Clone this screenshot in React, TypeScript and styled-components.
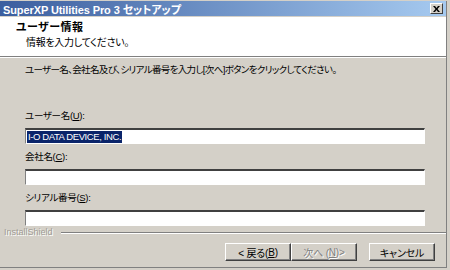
import React from 'react';
import styled, { createGlobalStyle } from 'styled-components';

const GlobalStyle = createGlobalStyle`
  html, body {
    margin: 0;
    padding: 0;
    background: #d4d0c8;
  }
  body {
    font-family: "Noto Sans CJK JP", "Liberation Sans", sans-serif;
    font-size: 11px;
    color: #000;
  }
`;

const jp = `"Liberation Sans", "Noto Sans CJK JP", sans-serif`;

const Frame = styled.div`
  width: 450px;
  height: 270px;
  box-sizing: border-box;
  padding: 1px 3px 2px 0;
  background: #d4d0c8;
  display: flex;
  flex-direction: column;
  overflow: hidden;
`;

const Window = styled.div`
  flex: 1;
  display: flex;
  flex-direction: column;
  border-right: 1px solid #808080;
  border-bottom: 1px solid #808080;
  min-height: 0;
`;

const TitleBar = styled.div`
  height: 15px;
  display: flex;
  align-items: center;
  justify-content: space-between;
  padding: 0 3px;
  background: linear-gradient(to right, #3b5e9f, #a6caf0);
  color: #fff;
  font-family: ${jp};
  font-weight: bold;
  font-size: 11px;
  font-feature-settings: 'palt';
  letter-spacing: -0.1px;
  white-space: nowrap;
`;

const CloseButton = styled.div`
  width: 13px;
  height: 11px;
  box-sizing: border-box;
  background: #d4d0c8;
  border: 1px solid;
  border-color: #fff #404040 #404040 #fff;
  display: flex;
  align-items: center;
  justify-content: center;
`;

const Header = styled.div`
  background: #fff;
  height: 40px;
  margin-top: 1px;
  padding: 4px 0 0 16px;
  box-sizing: border-box;
  border-bottom: 1px solid #808080;
  font-family: ${jp};
  font-feature-settings: 'palt';
`;

const HeaderTitle = styled.div`
  font-weight: bold;
  font-size: 11px;
  line-height: 13px;
  letter-spacing: 0.5px;
`;

const HeaderSub = styled.div`
  font-size: 10px;
  line-height: 13px;
  margin-top: 2px;
  padding-left: 10px;
  letter-spacing: -0.3px;
`;

const Body = styled.div`
  border-top: 1px solid #fff;
  padding: 5px 21px 0 25px;
  display: flex;
  flex-direction: column;
  font-family: ${jp};
  font-feature-settings: 'palt';
  font-size: 9.5px;
  letter-spacing: -0.3px;
`;

const Intro = styled.div`
  line-height: 13px;
  margin-bottom: 34px;
  white-space: nowrap;
  letter-spacing: -0.65px;
`;

const Label = styled.div`
  line-height: 12px;
  margin: 0 0 6px;
`;

const Field = styled.div`
  height: 16px;
  box-sizing: border-box;
  background: #fff;
  border-style: solid;
  border-width: 2px 1px 1px 1px;
  border-color: #404040 #fff #fff #808080;
  margin-bottom: 7px;
  display: flex;
  align-items: center;
  padding-left: 1px;

  &:last-child {
    margin-bottom: 0;
  }
`;

const Selected = styled.span`
  background: #0a246a;
  color: #fff;
  font-family: "Liberation Sans", sans-serif;
  font-size: 9.5px;
  line-height: 12px;
  padding: 0 1px;
  letter-spacing: -0.4px;
`;

const BrandRow = styled.div`
  display: flex;
  align-items: center;
  gap: 8px;
  padding: 0 0 0 4px;
  margin-top: 2px;
  height: 9px;
`;

const Brand = styled.span`
  font-family: "Liberation Sans", sans-serif;
  font-size: 9px;
  color: #a09c94;
  text-shadow: 1px 1px 0 #fff;
  line-height: 9px;
`;

const Etch = styled.div`
  flex: 1;
  height: 0;
  border-top: 1px solid #808080;
  border-bottom: 1px solid #fff;
`;

const ButtonRow = styled.div`
  display: flex;
  justify-content: flex-end;
  padding: 0 11px 0 0;
  margin-top: 6px;
`;

const Button = styled.div<{ $disabled?: boolean; $gap?: number }>`
  width: 66px;
  height: 18px;
  box-sizing: border-box;
  margin-left: ${p => p.$gap ?? 0}px;
  border: 1px solid;
  border-color: #fff #404040 #404040 #fff;
  box-shadow: inset -1px -1px 0 #808080;
  display: flex;
  align-items: center;
  justify-content: center;
  font-family: ${jp};
  font-feature-settings: 'palt';
  font-size: 10px;
  letter-spacing: -0.2px;
  color: ${p => (p.$disabled ? '#808080' : '#000')};
  text-shadow: ${p => (p.$disabled ? '1px 1px 0 #fff' : 'none')};
  white-space: nowrap;
`;

export default function App() {
  return (
    <>
      <GlobalStyle />
      <Frame>
        <Window>
          <TitleBar>
            <span>SuperXP Utilities Pro 3 セットアップ</span>
            <CloseButton>
              <svg width="7" height="6" viewBox="0 0 7 6">
                <path d="M0 0h2l1.5 2L5 0h2L4.5 3L7 6H5L3.5 4L2 6H0l2.5-3z" fill="#000" />
              </svg>
            </CloseButton>
          </TitleBar>
          <Header>
            <HeaderTitle>ユーザー情報</HeaderTitle>
            <HeaderSub>情報を入力してください。</HeaderSub>
          </Header>
          <Body>
            <Intro>ユーザー名、会社名及び、シリアル番号を入力し[次へ]ボタンをクリックしてください。</Intro>
            <Label>ユーザー名(<u>U</u>):</Label>
            <Field>
              <Selected>I-O DATA DEVICE, INC.</Selected>
            </Field>
            <Label>会社名(<u>C</u>):</Label>
            <Field />
            <Label>シリアル番号(<u>S</u>):</Label>
            <Field />
          </Body>
          <BrandRow>
            <Brand>InstallShield</Brand>
            <Etch />
          </BrandRow>
          <ButtonRow>
            <Button>&lt; 戻る(<u>B</u>)</Button>
            <Button $disabled>次へ (<u>N</u>)&gt;</Button>
            <Button $gap={12}>キャンセル</Button>
          </ButtonRow>
        </Window>
      </Frame>
    </>
  );
}
